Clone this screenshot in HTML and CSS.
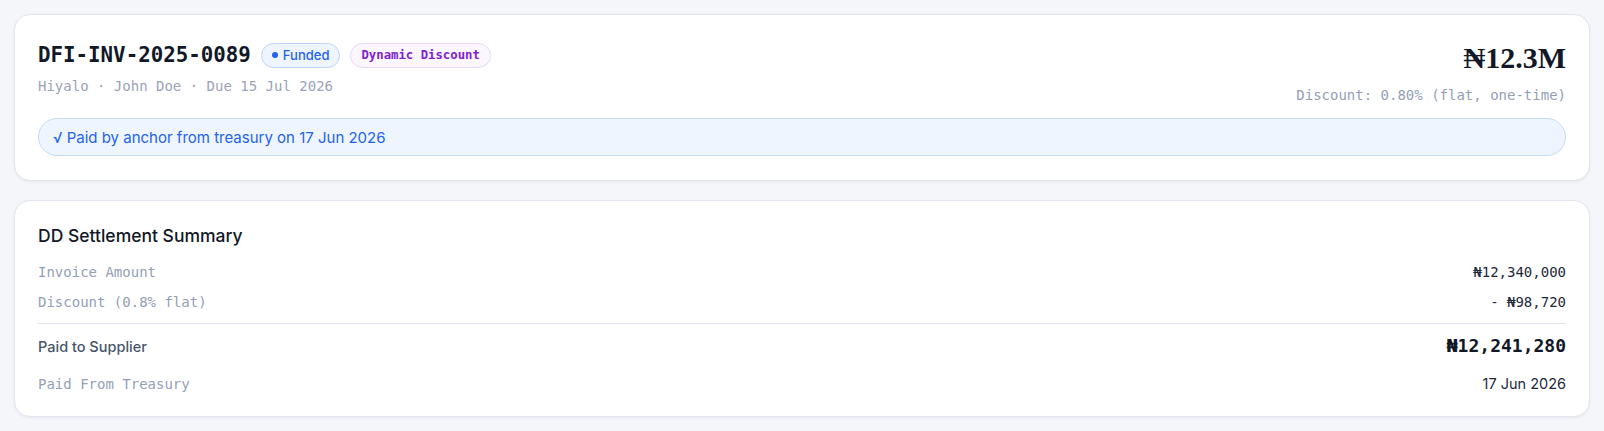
FILE: index.html
```html
<!DOCTYPE html>
<html lang="en">

<head>
    <meta charset="UTF-8">
    <meta name="viewport" content="width=device-width, initial-scale=1.0">
    <title>DFI-INV-2025-0089</title>
    <link rel="stylesheet" href="styles.css">
</head>

<body>
    <div class="card invoice-card">
        <div class="invoice-head">
            <div class="invoice-left">
                <div class="title-row">
                    <h1 class="invoice-id">DFI-INV-2025-0089</h1>
                    <span class="badge badge-funded"><span class="dot"></span>Funded</span>
                    <span class="badge badge-dd">Dynamic Discount</span>
                </div>
                <p class="invoice-meta">Hiyalo · John Doe · Due 15 Jul 2026</p>
            </div>
            <div class="invoice-right">
                <div class="invoice-amount">₦12.3M</div>
                <p class="invoice-rate">Discount: 0.80% (flat, one-time)</p>
            </div>
        </div>
        <div class="paid-note">√ Paid by anchor from treasury on 17 Jun 2026</div>
    </div>

    <div class="card summary-card">
        <h2 class="summary-title">DD Settlement Summary</h2>
        <div class="summary-row">
            <span class="row-label">Invoice Amount</span>
            <span class="row-value">₦12,340,000</span>
        </div>
        <div class="summary-row">
            <span class="row-label">Discount (0.8% flat)</span>
            <span class="row-value">- ₦98,720</span>
        </div>
        <div class="summary-row total-row">
            <span class="total-label">Paid to Supplier</span>
            <span class="total-value">₦12,241,280</span>
        </div>
        <div class="summary-row last-row">
            <span class="row-label">Paid From Treasury</span>
            <span class="date-value">17 Jun 2026</span>
        </div>
    </div>
</body>

</html>
```

FILE: styles.css
```css
body {
    margin: 0;
    padding: 14px;
    background-color: #f5f6fa;
    font-family: "Inter", "Noto Sans", sans-serif;
    color: #0f172a;
}

.card {
    background-color: #fff;
    border: 1px solid #e1e5ee;
    border-radius: 16px;
    box-shadow: 0 1px 3px rgba(15, 23, 42, 0.06);
}

.invoice-card {
    padding: 22px 23px 24px;
    margin-bottom: 19px;
}

.invoice-head {
    display: flex;
    justify-content: space-between;
    align-items: flex-start;
}

.invoice-left {
    padding-top: 4px;
}

.title-row {
    display: flex;
    align-items: center;
    gap: 10px;
}

.invoice-id {
    margin: 0;
    font-family: "DejaVu Sans Mono", monospace;
    font-size: 20.8px;
    font-weight: 700;
    line-height: 28px;
    color: #111827;
}

.badge {
    display: inline-flex;
    align-items: center;
    height: 23px;
    padding: 0 10px;
    border-radius: 13px;
    white-space: nowrap;
}

.badge-funded {
    gap: 5px;
    background-color: #eef5ff;
    border: 1px solid #bcd7fb;
    color: #2563eb;
    font-size: 13px;
    font-weight: 500;
}

.badge-funded .dot {
    width: 6px;
    height: 6px;
    border-radius: 50%;
    background-color: #2563eb;
}

.badge-dd {
    background-color: #fbf6ff;
    border: 1px solid #ead8fc;
    color: #7e22ce;
    font-family: "DejaVu Sans Mono", monospace;
    font-size: 12.3px;
    font-weight: 700;
}

.invoice-meta {
    margin: 7px 0 0;
    font-family: "DejaVu Sans Mono", monospace;
    font-size: 14px;
    line-height: 20px;
    color: #9aa3b8;
}

.invoice-right {
    text-align: right;
}

.invoice-amount {
    margin-top: 3px;
    font-family: "Liberation Serif", "DejaVu Serif", serif;
    font-size: 30px;
    font-weight: 700;
    line-height: 36px;
    color: #111827;
}

.invoice-rate {
    margin: 9px 0 0;
    font-family: "DejaVu Sans Mono", monospace;
    font-size: 14px;
    line-height: 20px;
    color: #94a0b8;
}

.paid-note {
    margin-top: 13px;
    height: 36px;
    display: flex;
    align-items: center;
    padding: 0 14px;
    background-color: #eef5ff;
    border: 1px solid #c3dcfb;
    border-radius: 19px;
    color: #2563eb;
    font-size: 15px;
}

.summary-card {
    padding: 23px 23px 17px;
}

.summary-title {
    margin: 0 0 9px;
    font-size: 17.5px;
    font-weight: 500;
    line-height: 24px;
    color: #111827;
}

.summary-row {
    display: flex;
    justify-content: space-between;
    align-items: baseline;
    padding: 5px 0;
    line-height: 20px;
}

.row-label {
    font-family: "DejaVu Sans Mono", monospace;
    font-size: 14px;
    color: #94a0b8;
}

.row-value {
    font-family: "DejaVu Sans Mono", monospace;
    font-size: 14px;
    color: #1e293b;
}

.total-row {
    margin-top: 6px;
    padding: 9px 0;
    border-top: 1px solid #e2e6ee;
    line-height: 26px;
}

.total-label {
    font-size: 14.5px;
    font-weight: 500;
    color: #475569;
}

.total-value {
    font-family: "DejaVu Sans Mono", monospace;
    font-size: 18px;
    font-weight: 700;
    color: #111827;
}

.date-value {
    font-size: 14.5px;
    color: #1e293b;
}
```
